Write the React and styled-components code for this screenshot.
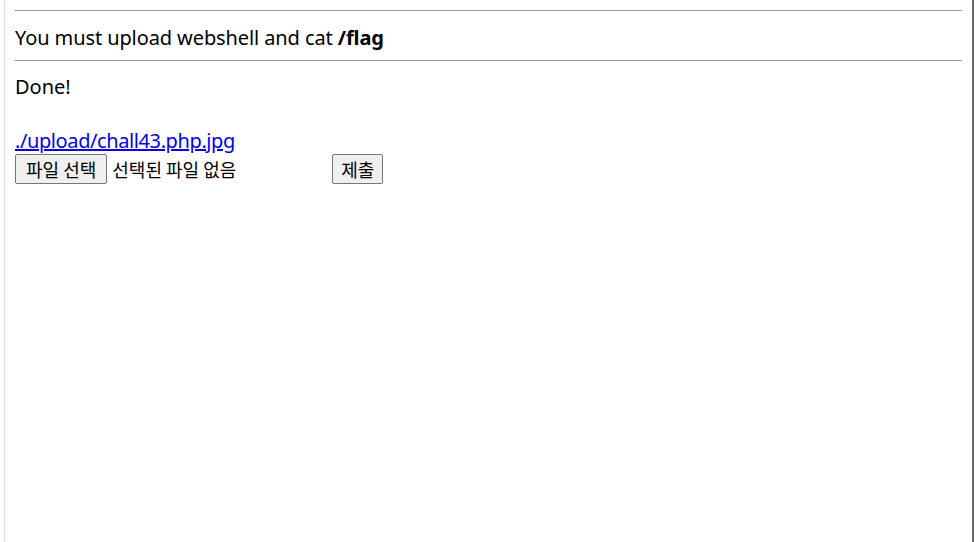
import React from 'react'
import styled, { createGlobalStyle } from 'styled-components'

const GlobalStyle = createGlobalStyle`
  html, body {
    margin: 0;
    padding: 0;
    background: #fff;
  }
  body {
    font-family: "Noto Sans", "Noto Sans CJK KR", sans-serif;
    color: #000;
  }
`

const Frame = styled.div`
  box-sizing: border-box;
  margin-left: 4px;
  width: 970px;
  height: 542px;
  border-left: 1px solid #d8d8d8;
  border-right: 2px solid #6d6a5c;
  padding: 10px 10px 0 10px;
  overflow: hidden;
`

const Rule = styled.hr`
  margin: 0;
  border: 0;
  border-top: 1px solid #9a9a9a;
  height: 0;
`

const Title = styled.div`
  font-size: 20px;
  line-height: 27px;
  padding: 13px 0 9px;
  letter-spacing: -0.1px;
`

const Flag = styled.b`
  font-weight: 700;
`

const Body = styled.div`
  font-size: 20px;
  line-height: 27px;
  padding-top: 12px;
`

const Line = styled.div`
  height: 27px;
`

const FileLink = styled.a`
  color: #0000ee;
  text-decoration: underline;
  letter-spacing: -0.4px;
`

const UploadForm = styled.form`
  display: flex;
  align-items: center;
  height: 30px;
  margin: 0;
`

const Button = styled.button`
  box-sizing: border-box;
  font-family: "Noto Sans CJK KR", sans-serif;
  font-size: 18px;
  line-height: 1;
  height: 30px;
  padding: 0 ${(p) => p.$pad}px;
  background: #efefef;
  border: 1px solid #767676;
  border-radius: 2px;
  color: #000;
`

const FileName = styled.span`
  font-family: "Noto Sans CJK KR", sans-serif;
  font-size: 18px;
  line-height: 30px;
  margin-left: 5px;
  width: 220px;
`

export default function App() {
  return (
    <>
      <GlobalStyle />
      <Frame>
        <Rule />
        <Title>
          You must upload webshell and cat <Flag>/flag</Flag>
        </Title>
        <Rule />
        <Body>
          <Line>Done!</Line>
          <Line />
          <Line>
            <FileLink href="#">./upload/chall43.php.jpg</FileLink>
          </Line>
          <UploadForm onSubmit={(e) => e.preventDefault()}>
            <Button type="button" $pad={10}>파일 선택</Button>
            <FileName>선택된 파일 없음</FileName>
            <Button type="submit" $pad={8}>제출</Button>
          </UploadForm>
        </Body>
      </Frame>
    </>
  )
}
